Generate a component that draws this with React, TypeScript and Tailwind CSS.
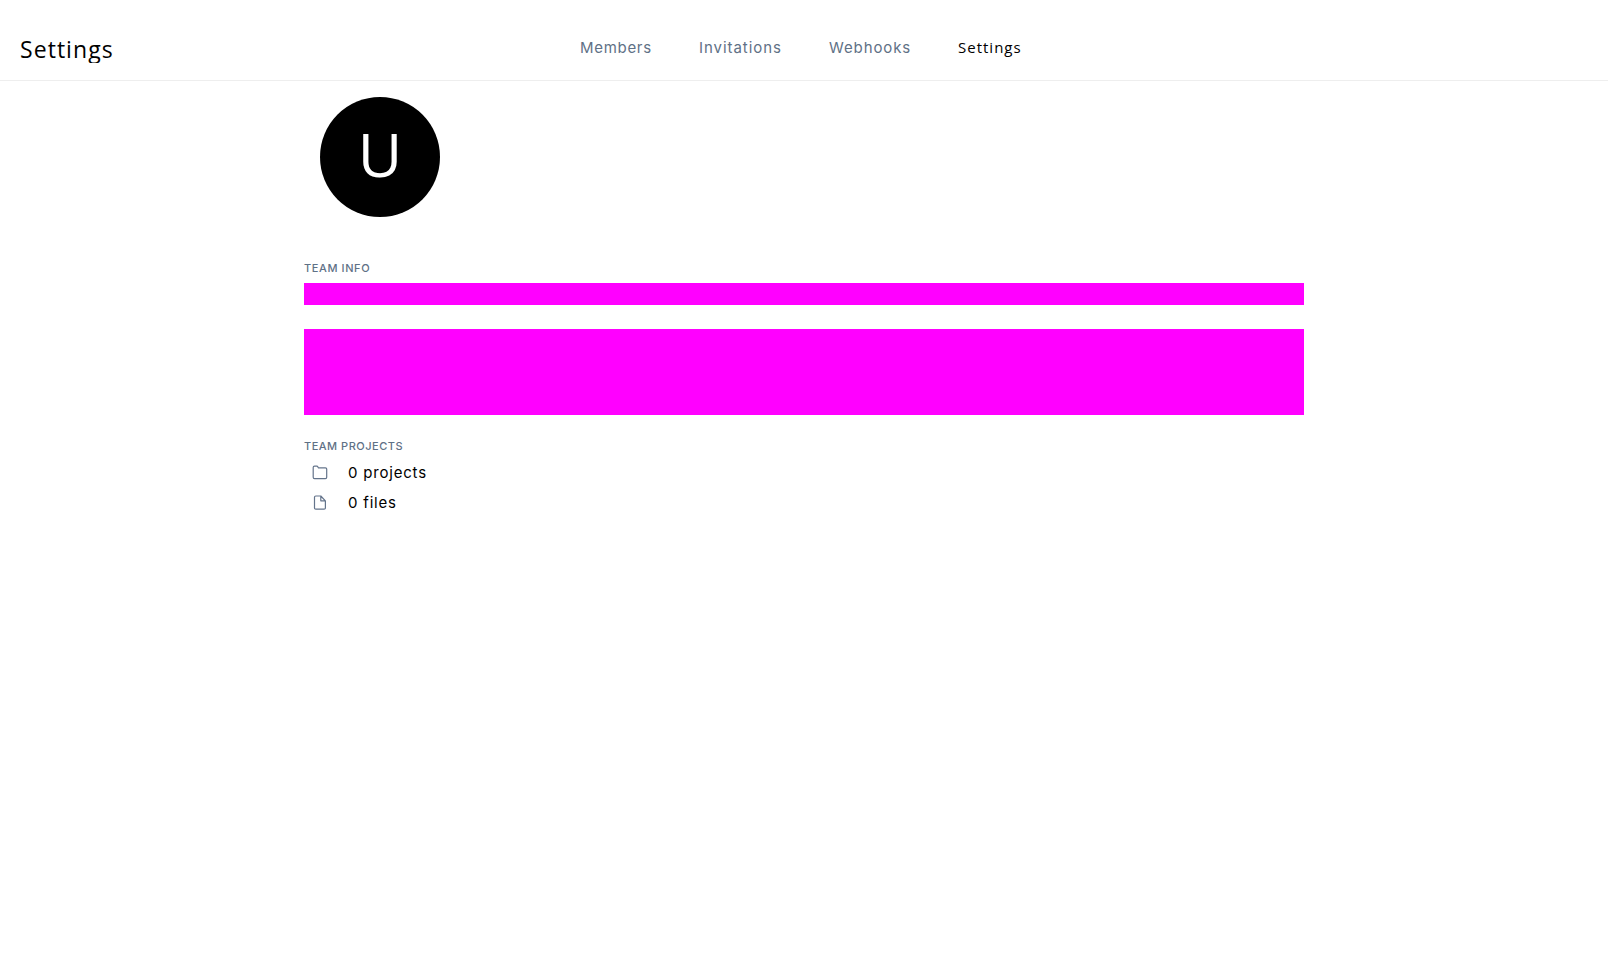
const navItems = [
  { label: "Members", style: "w-[119px] pt-px font-['Inter',sans-serif] tracking-[0.7px] text-[#5f7186]" },
  { label: "Invitations", style: "w-[130px] pt-px font-['Inter',sans-serif] tracking-[0.95px] text-[#5f7186]" },
  { label: "Webhooks", style: "w-[129px] pt-px font-['Inter',sans-serif] tracking-[0.9px] text-[#5f7186]" },
  { label: "Settings", style: "w-[64px] tracking-[1px] text-black" },
];

function Header() {
  return (
    <header className="flex h-[81px] items-start border-b border-[#eeeeee]">
      <div className="w-[580px] pl-5">
        <h1 className="mt-[33px] h-[30px] w-fit overflow-hidden text-[23px] leading-[32px] tracking-[1.05px] text-black">
          Settings
        </h1>
      </div>
      <nav className="mt-[35px] flex text-[15px] leading-6">
        {navItems.map(({ label, style }) => (
          <a key={label} className={`${style} whitespace-nowrap`}>
            {label}
          </a>
        ))}
      </nav>
    </header>
  );
}

function FolderIcon() {
  return (
    <svg viewBox="0 0 16 16" className="size-4" fill="none" stroke="#64748b" strokeWidth="1.2" strokeLinejoin="round">
      <path d="M1.2 2.5Q1.2 1.2 2.5 1.2H4.9Q5.5 1.2 5.8 1.8L6.3 2.8H13.4Q14.7 2.8 14.7 4.1V12.3Q14.7 13.6 13.4 13.6H2.5Q1.2 13.6 1.2 12.3Z" />
    </svg>
  );
}

function FileIcon() {
  return (
    <svg viewBox="0 0 16 16" className="size-4" fill="none" stroke="#64748b" strokeWidth="1.2" strokeLinejoin="round">
      <path d="M8.8 1H3.8Q2.5 1 2.5 2.3V12.9Q2.5 14.2 3.8 14.2H12.1Q13.4 14.2 13.4 12.9V5.8ZM8.8 1V5.8H13.4" />
    </svg>
  );
}

export default function App() {
  return (
    <div className="h-[969px] overflow-hidden bg-white pr-4 font-['Open_Sans',sans-serif]">
      <Header />
      <main className="mx-auto flex w-[1000px] flex-col pt-4">
        <div className="ml-4 flex size-[120px] items-center justify-center rounded-full bg-black pb-2">
          <span className="text-[61px] leading-none text-white">U</span>
        </div>
        <h2 className="mt-[43px] h-[23px] font-['Inter',sans-serif] text-[11px] leading-4 font-medium tracking-[0.6px] text-[#5f7186]">TEAM INFO</h2>
        <div className="h-[22px] bg-[#ff00ff]" />
        <div className="mt-6 h-[86px] bg-[#ff00ff]" />
        <h2 className="mt-[23px] h-5 font-['Inter',sans-serif] text-[11px] leading-4 font-medium tracking-[0.5px] text-[#5f7186]">TEAM PROJECTS</h2>
        <div className="flex h-[30px] items-center gap-5 pl-2 font-['Inter',sans-serif] text-[15px] text-black">
          <FolderIcon />
          <span className="tracking-[0.8px]">0 projects</span>
        </div>
        <div className="flex h-[30px] items-center gap-5 pl-2 font-['Inter',sans-serif] text-[15px] text-black">
          <FileIcon />
          <span className="tracking-[0.8px]">0 files</span>
        </div>
      </main>
    </div>
  );
}
